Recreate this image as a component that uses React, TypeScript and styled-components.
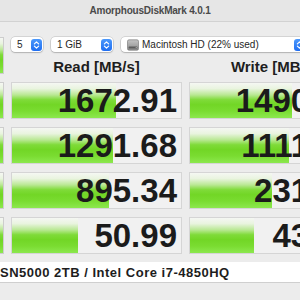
import React from 'react';
import styled, { createGlobalStyle } from 'styled-components';

const GlobalStyle = createGlobalStyle`
  html, body {
    margin: 0;
    padding: 0;
    width: 300px;
    height: 300px;
    overflow: hidden;
    background: #ececec;
  }
  body {
    font-family: "Liberation Sans", Arial, sans-serif;
  }
`;

const GREEN = `linear-gradient(to bottom,
  #f5f7f3 0%, #e9f4df 16%, #b9e893 34%, #7fdb39 48%,
  #72d626 62%, #7adc31 80%, #8ce84e 100%)`;

const Window = styled.div`
  width: 300px;
  height: 300px;
  overflow: hidden;
  background: #ececec;
  display: flex;
  flex-direction: column;
`;

const TitleBar = styled.div`
  flex: none;
  height: 22px;
  box-sizing: border-box;
  border-bottom: 1px solid #d2d2d2;
  background: #e6e6e6;
  display: flex;
  align-items: center;
  justify-content: center;
  font-size: 10px;
  font-weight: bold;
  letter-spacing: -0.2px;
  color: #4a4a4a;
`;

const Board = styled.div`
  display: grid;
  grid-template-columns: 4px 171px 171px;
  grid-template-rows: 15px 14px repeat(4, 37px);
  column-gap: 7px;
  row-gap: 8px;
  margin-top: 15px;
`;

const SideButton = styled.div<{ $tall?: boolean }>`
  grid-column: 1;
  grid-row: ${p => (p.$tall ? '1 / 3' : 'auto')};
  box-sizing: border-box;
  border: 1px solid #cdcdcd;
  border-left: none;
  background: ${GREEN};
`;

const PopupRow = styled.div`
  grid-column: 2 / 4;
  grid-row: 1;
  display: flex;
  gap: 8px;
`;

const Popup = styled.div<{ $w: number }>`
  flex: none;
  width: ${p => p.$w}px;
  height: 15px;
  box-sizing: border-box;
  background: #fff;
  border-radius: 4px;
  box-shadow: 0 0 0 0.5px rgba(0, 0, 0, 0.2), 0 1px 1.5px rgba(0, 0, 0, 0.16);
  display: flex;
  align-items: center;
  gap: 3px;
  padding: 0 1px 0 6px;
  font-size: 10px;
  color: #262626;
`;

const PopupLabel = styled.span`
  flex: 1;
  white-space: nowrap;
  overflow: hidden;
`;

const Header = styled.div`
  grid-row: 2;
  text-align: center;
  font-size: 15px;
  line-height: 14px;
  font-weight: bold;
  color: #1e1e1e;
  white-space: nowrap;
`;

const Cell = styled.div`
  box-sizing: border-box;
  border: 1px solid #d5d5d5;
  background-color: #f1f1f1;
  background-image: ${GREEN};
  background-repeat: no-repeat;
  padding-right: 4px;
  text-align: right;
  font-size: 33px;
  line-height: 36px;
  font-weight: bold;
  color: #1b1b1b;
  white-space: nowrap;
  overflow: hidden;
`;

const Footer = styled.div`
  margin-top: 8px;
  height: 21px;
  box-sizing: border-box;
  background: #fff;
  border-bottom: 1px solid #cfcfcf;
  font-size: 13px;
  line-height: 21px;
  font-weight: bold;
  letter-spacing: 0.5px;
  color: #1d1d1d;
  white-space: nowrap;
  overflow: hidden;
`;

const Stepper = () => (
  <svg width="11" height="12" viewBox="0 0 11 12">
    <defs>
      <linearGradient id="stepperFill" x1="0" y1="0" x2="0" y2="1">
        <stop offset="0" stopColor="#4b98fb" />
        <stop offset="1" stopColor="#1f6ef1" />
      </linearGradient>
    </defs>
    <rect x="0" y="0" width="11" height="12" rx="3" fill="url(#stepperFill)" />
    <path
      d="M3.4 4.9 L5.5 2.9 L7.6 4.9 M3.4 7.1 L5.5 9.1 L7.6 7.1"
      stroke="#fff"
      strokeWidth="1.2"
      fill="none"
      strokeLinecap="round"
      strokeLinejoin="round"
    />
  </svg>
);

const DriveIcon = () => (
  <svg width="12" height="12" viewBox="0 0 12 12">
    <defs>
      <linearGradient id="driveFill" x1="0" y1="0" x2="0" y2="1">
        <stop offset="0" stopColor="#c4c4c4" />
        <stop offset="1" stopColor="#8c8c8c" />
      </linearGradient>
    </defs>
    <rect x="0.5" y="0.8" width="11" height="10.4" rx="1.5" fill="url(#driveFill)" stroke="#6e6e6e" strokeWidth="0.6" />
    <rect x="1.6" y="7.6" width="8.8" height="2" rx="0.6" fill="#5c5c5c" />
    <circle cx="9.2" cy="8.6" r="0.5" fill="#d0d0d0" />
  </svg>
);

type Result = { read: string; write: string };

const results: Result[] = [
  { read: '1672.91', write: '1490.62' },
  { read: '1291.68', write: '1111.47' },
  { read: '895.34', write: '231.05' },
  { read: '50.99', write: '43.88' },
];

// bar length grows with the log of the speed
const barWidth = (v: string) => Math.round(23 + 25 * Math.log10(parseFloat(v)));

const App: React.FC = () => {
  return (
    <>
      <GlobalStyle />
      <Window>
        <TitleBar>AmorphousDiskMark 4.0.1</TitleBar>
        <Board>
          <SideButton $tall />
          <PopupRow>
            <Popup $w={32}>
              <PopupLabel>5</PopupLabel>
              <Stepper />
            </Popup>
            <Popup $w={62}>
              <PopupLabel>1 GiB</PopupLabel>
              <Stepper />
            </Popup>
            <Popup $w={185}>
              <DriveIcon />
              <PopupLabel>Macintosh HD (22% used)</PopupLabel>
              <Stepper />
            </Popup>
          </PopupRow>
          <Header>Read [MB/s]</Header>
          <Header>Write [MB/s]</Header>
          {results.map((r, i) => (
            <React.Fragment key={i}>
              <SideButton />
              <Cell style={{ backgroundSize: `${barWidth(r.read)}px 100%` }}>{r.read}</Cell>
              <Cell style={{ backgroundSize: `${barWidth(r.write)}px 100%` }}>{r.write}</Cell>
            </React.Fragment>
          ))}
        </Board>
        <Footer>SN5000 2TB / Intel Core i7-4850HQ</Footer>
      </Window>
    </>
  );
};

export default App;
